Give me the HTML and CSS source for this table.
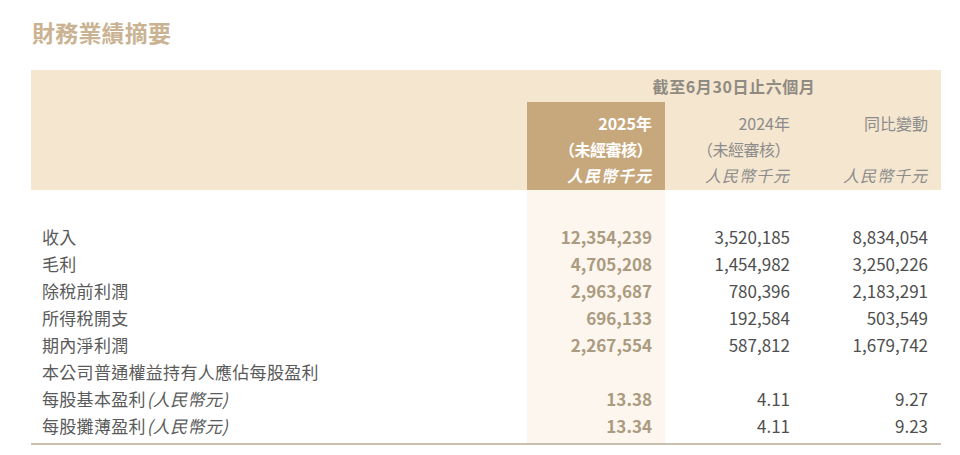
FILE: index.html
```html
<!DOCTYPE html>
<html lang="zh-Hant">
<head>
<meta charset="utf-8">
<link rel="stylesheet" href="styles.css">
</head>
<body>
<div class="page">
  <h1 class="title">財務業績摘要</h1>
  <table class="fin">
    <colgroup>
      <col class="c-label"><col class="c-num"><col class="c-num"><col class="c-num">
    </colgroup>
    <thead>
      <tr class="period">
        <th class="blank"></th>
        <th colspan="3" class="period-cell">截至6月30日止六個月</th>
      </tr>
      <tr class="colhead">
        <th class="blank"></th>
        <th class="cur"><span class="yr">2025年</span><span class="sub">（未經審核）</span><span class="unit">人民幣千元</span></th>
        <th><span class="yr">2024年</span><span class="sub">（未經審核）</span><span class="unit">人民幣千元</span></th>
        <th><span class="yr">同比變動</span><span class="sub">&nbsp;</span><span class="unit">人民幣千元</span></th>
      </tr>
    </thead>
    <tbody>
      <tr class="spacer"><td></td><td class="cur"></td><td></td><td></td></tr>
      <tr><td class="lbl">收入</td><td class="cur">12,354,239</td><td>3,520,185</td><td>8,834,054</td></tr>
      <tr><td class="lbl">毛利</td><td class="cur">4,705,208</td><td>1,454,982</td><td>3,250,226</td></tr>
      <tr><td class="lbl">除稅前利潤</td><td class="cur">2,963,687</td><td>780,396</td><td>2,183,291</td></tr>
      <tr><td class="lbl">所得稅開支</td><td class="cur">696,133</td><td>192,584</td><td>503,549</td></tr>
      <tr><td class="lbl">期內淨利潤</td><td class="cur">2,267,554</td><td>587,812</td><td>1,679,742</td></tr>
      <tr><td class="lbl">本公司普通權益持有人應佔每股盈利</td><td class="cur"></td><td></td><td></td></tr>
      <tr><td class="lbl">每股基本盈利<em>(人民幣元)</em></td><td class="cur">13.38</td><td>4.11</td><td>9.27</td></tr>
      <tr class="last"><td class="lbl">每股攤薄盈利<em>(人民幣元)</em></td><td class="cur">13.34</td><td>4.11</td><td>9.23</td></tr>
    </tbody>
  </table>
</div>
</body>
</html>
```
FILE: styles.css
```css
html, body {
  margin: 0;
  padding: 0;
  background: #ffffff;
}
body {
  font-family: "Noto Sans CJK TC", "Noto Sans", sans-serif;
  color: #4f4f4f;
}
.page {
  padding: 18px 19px 0 31px;
}
.title {
  margin: 0 0 0 1px;
  font-size: 23px;
  line-height: 28px;
  font-weight: 700;
  color: #cab393;
  letter-spacing: 0.2px;
}
.fin {
  margin-top: 24px;
  width: 910px;
  border-collapse: collapse;
  table-layout: fixed;
  font-size: 17px;
}
.c-label { width: 496px; }
.c-num { width: 138px; }
.fin th, .fin td {
  padding: 0 13px 0 0;
  text-align: right;
  white-space: nowrap;
}
.fin thead th {
  background: #f5e6d0;
  font-weight: 400;
  color: #8c8c8c;
}
.period-cell {
  height: 32px;
  text-align: center !important;
  padding: 0 !important;
  font-size: 16px;
  letter-spacing: 0.6px;
  font-weight: 700 !important;
  color: #8f8a82 !important;
  vertical-align: middle;
}
.colhead th {
  padding-top: 8px;
  padding-bottom: 2px;
  vertical-align: top;
  font-size: 16px;
}
.colhead th span {
  display: block;
  line-height: 26px;
}
.colhead .sub {
  letter-spacing: -0.5px;
}
.colhead .unit {
  font-style: italic;
  letter-spacing: 1px;
}
.fin thead th.cur {
  background: #c6a87c;
  color: #ffffff;
  font-weight: 700;
}
.fin tbody td {
  height: 27px;
  line-height: 27px;
  padding-top: 0;
  padding-bottom: 0;
}
.fin tbody td.cur {
  background: #fcf6ee;
  color: #ab9b80;
  font-weight: 700;
}
.fin tbody td.lbl {
  text-align: left;
  padding-left: 11px;
  color: #5a5a5a;
  letter-spacing: 0.3px;
}
.lbl em {
  font-style: italic;
  margin-left: 1px;
}
.spacer td {
  height: 33px !important;
}
.last td {
  padding-bottom: 4px !important;
  vertical-align: top;
  height: 27px !important;
  border-bottom: 2px solid #c9bfaf;
}
```
